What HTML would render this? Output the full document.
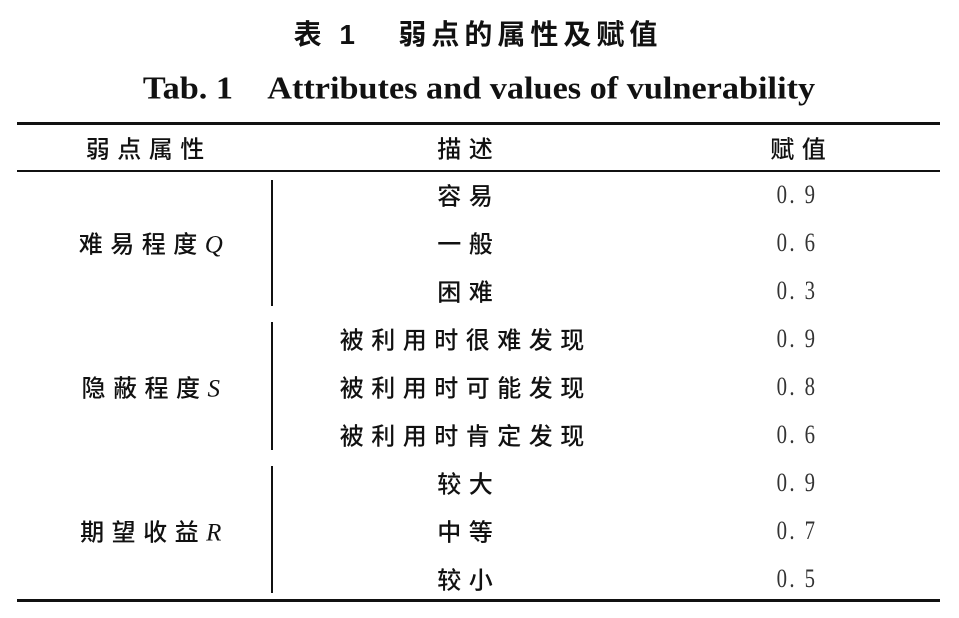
<!DOCTYPE html>
<html><head><meta charset="utf-8"><style>
body{margin:0;width:959px;height:618px;background:#fff;position:relative;overflow:hidden;font-family:"Liberation Serif","Noto Serif CJK SC",serif;color:#111}
.t{position:absolute;white-space:nowrap;transform:translate(-50%,-50%)}
.c{font-family:"Liberation Sans","Noto Sans CJK SC",sans-serif;font-size:24px;letter-spacing:7.5px;padding-left:7.5px;font-weight:500}
.n{font-family:"Liberation Serif",serif;font-size:26px;color:#333;letter-spacing:3px;transform:translate(-50%,-50%) scaleX(0.8)}
.h{position:absolute;background:#111;left:17px;width:923px}
.v{position:absolute;left:271px;width:1.5px;background:#111}
</style></head><body>
<div class="t" style="left:478px;top:33px;font-family:'Liberation Sans','Noto Sans CJK SC',sans-serif;font-size:28px;font-weight:bold;letter-spacing:5px">表 1&nbsp;&nbsp;&nbsp;弱点的属性及赋值</div>
<div class="t" style="left:479px;top:88px;font-size:32px;font-weight:bold;transform:translate(-50%,-50%) scaleX(1.07)">Tab. 1&nbsp;&nbsp;&nbsp;&nbsp;Attributes and values of vulnerability</div>
<div class="h" style="top:122px;height:3px"></div>
<div class="h" style="top:170px;height:1.5px"></div>
<div class="h" style="top:599px;height:3px"></div>
<div class="v" style="top:180px;height:126px"></div>
<div class="v" style="top:322px;height:128px"></div>
<div class="v" style="top:466px;height:127px"></div>
<div class="t c" style="left:145px;top:147px">弱点属性</div>
<div class="t c" style="left:465px;top:147px">描述</div>
<div class="t c" style="left:798px;top:147px">赋值</div>
<div class="t c" style="left:147px;top:242px">难易程度<i style="font-family:'Liberation Serif',serif;font-size:25px;letter-spacing:0">Q</i></div>
<div class="t c" style="left:147px;top:386px">隐蔽程度<i style="font-family:'Liberation Serif',serif;font-size:25px;letter-spacing:0">S</i></div>
<div class="t c" style="left:147px;top:530px">期望收益<i style="font-family:'Liberation Serif',serif;font-size:25px;letter-spacing:0">R</i></div>
<div class="t c" style="left:465px;top:194px">容易</div>
<div class="t c" style="left:465px;top:242px">一般</div>
<div class="t c" style="left:465px;top:290px">困难</div>
<div class="t c" style="left:462px;top:338px">被利用时很难发现</div>
<div class="t c" style="left:462px;top:386px">被利用时可能发现</div>
<div class="t c" style="left:462px;top:434px">被利用时肯定发现</div>
<div class="t c" style="left:465px;top:482px">较大</div>
<div class="t c" style="left:465px;top:530px">中等</div>
<div class="t c" style="left:465px;top:578px">较小</div>
<div class="t n" style="left:797px;top:195px">0. 9</div>
<div class="t n" style="left:797px;top:243px">0. 6</div>
<div class="t n" style="left:797px;top:291px">0. 3</div>
<div class="t n" style="left:797px;top:339px">0. 9</div>
<div class="t n" style="left:797px;top:387px">0. 8</div>
<div class="t n" style="left:797px;top:435px">0. 6</div>
<div class="t n" style="left:797px;top:483px">0. 9</div>
<div class="t n" style="left:797px;top:531px">0. 7</div>
<div class="t n" style="left:797px;top:579px">0. 5</div>
</body></html>
